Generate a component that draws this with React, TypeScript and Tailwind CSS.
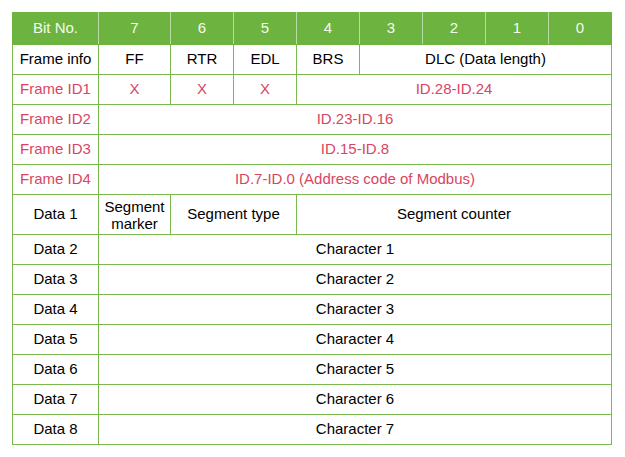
const red = "text-[#d9455f]";

type Cell = { text: string; span?: number; red?: boolean; small?: boolean };
type Row = { label: string; red?: boolean; tall?: boolean; cells: Cell[] };

const rows: Row[] = [
  {
    label: "Frame info",
    cells: [
      { text: "FF" },
      { text: "RTR" },
      { text: "EDL" },
      { text: "BRS" },
      { text: "DLC (Data length)", span: 4 },
    ],
  },
  {
    label: "Frame ID1",
    red: true,
    cells: [
      { text: "X", red: true },
      { text: "X", red: true },
      { text: "X", red: true },
      { text: "ID.28-ID.24", span: 5, red: true },
    ],
  },
  { label: "Frame ID2", red: true, cells: [{ text: "ID.23-ID.16", span: 8, red: true }] },
  { label: "Frame ID3", red: true, cells: [{ text: "ID.15-ID.8", span: 8, red: true }] },
  {
    label: "Frame ID4",
    red: true,
    cells: [{ text: "ID.7-ID.0 (Address code of Modbus)", span: 8, red: true }],
  },
  {
    label: "Data 1",
    tall: true,
    cells: [
      { text: "Segment marker", small: true },
      { text: "Segment type", span: 2 },
      { text: "Segment counter", span: 5 },
    ],
  },
  ...[1, 2, 3, 4, 5, 6, 7].map((n) => ({
    label: `Data ${n + 1}`,
    cells: [{ text: `Character ${n}`, span: 8 }],
  })),
];

const widths = [86, 72, 63, 63, 63, 63, 63, 63, 63];

export default function App() {
  return (
    <div className="min-h-screen bg-white pt-3 pl-3 font-['Liberation_Sans',Arial,sans-serif] text-[15px]">
      <table className="table-fixed border-collapse w-[599px]">
        <colgroup>
          {widths.map((w, i) => (
            <col key={i} style={{ width: w }} />
          ))}
        </colgroup>
        <thead>
          <tr className="h-[32px] bg-[#6cb33f] text-[#f4fbee]">
            {["Bit No.", "7", "6", "5", "4", "3", "2", "1", "0"].map((h) => (
              <th key={h} className="border border-y-[#6cb33f] border-x-[#b9dca3] first:border-l-[#6cb33f] last:border-r-[#6cb33f] font-normal text-center p-0">
                {h}
              </th>
            ))}
          </tr>
        </thead>
        <tbody>
          {rows.map((r) => (
            <tr key={r.label} className={r.tall ? "h-[40px]" : "h-[30px]"}>
              <td className={`border border-[#7ab94e] text-center p-0 ${r.red ? red : "text-black"}`}>
                {r.label}
              </td>
              {r.cells.map((c, i) => (
                <td
                  key={i}
                  colSpan={c.span ?? 1}
                  className={`border border-[#7ab94e] text-center p-0 ${c.red ? red : "text-black"} ${
                    c.small ? "leading-[17px] px-1" : ""
                  }`}
                >
                  {c.text}
                </td>
              ))}
            </tr>
          ))}
        </tbody>
      </table>
    </div>
  );
}
